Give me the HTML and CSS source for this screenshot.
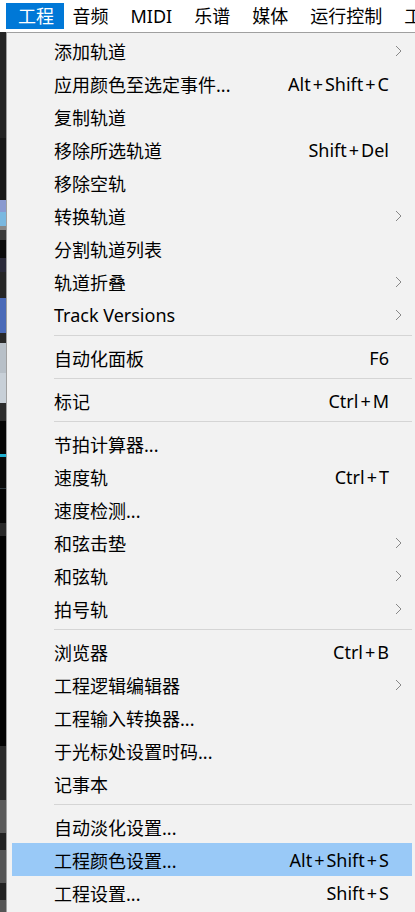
FILE: index.html
```html
<!DOCTYPE html>
<html lang="zh-CN">
<head>
  <meta charset="UTF-8" />
  <meta name="viewport" content="width=device-width, initial-scale=1.0"/>
  <title>工程菜单</title>
  <link rel="stylesheet" href="styles.css">
</head>
<body>

<!-- 顶部菜单栏 -->
<div class="menubar">
  <span class="bar-item active">工程</span>
  <span class="bar-item">音频</span>
  <span class="bar-item">MIDI</span>
  <span class="bar-item">乐谱</span>
  <span class="bar-item">媒体</span>
  <span class="bar-item">运行控制</span>
  <span class="bar-item">工</span>
</div>

<div class="workspace">
  <!-- 背后的程序窗口（只露出一条） -->
  <div class="strip">
    <div class="s1"></div><div class="s2"></div><div class="s3"></div><div class="s4"></div>
    <div class="s5"></div><div class="s6"></div><div class="s7"></div><div class="s8"></div>
    <div class="s9"></div><div class="s10"></div><div class="s11"></div><div class="s12"></div>
    <div class="s13"></div><div class="s14"></div><div class="s15"></div><div class="s16"></div>
    <div class="s17"></div><div class="s18"></div><div class="s19"></div><div class="s20"></div>
    <div class="s21"></div><div class="s22"></div><div class="s23"></div><div class="s24"></div>
    <div class="s25"></div><div class="s26"></div>
  </div>

  <!-- 下拉菜单 -->
  <div class="menu">
    <div class="row"><span class="label">添加轨道</span><span class="key"></span><span class="sub"><svg viewBox="0 0 7 12"><polyline points="1,1 6,6 1,11"/></svg></span></div>
    <div class="row"><span class="label">应用颜色至选定事件...</span><span class="key">Alt<i>+</i>Shift<i>+</i>C</span><span class="sub"></span></div>
    <div class="row"><span class="label">复制轨道</span><span class="key"></span><span class="sub"></span></div>
    <div class="row"><span class="label">移除所选轨道</span><span class="key">Shift<i>+</i>Del</span><span class="sub"></span></div>
    <div class="row"><span class="label">移除空轨</span><span class="key"></span><span class="sub"></span></div>
    <div class="row"><span class="label">转换轨道</span><span class="key"></span><span class="sub"><svg viewBox="0 0 7 12"><polyline points="1,1 6,6 1,11"/></svg></span></div>
    <div class="row"><span class="label">分割轨道列表</span><span class="key"></span><span class="sub"></span></div>
    <div class="row"><span class="label">轨道折叠</span><span class="key"></span><span class="sub"><svg viewBox="0 0 7 12"><polyline points="1,1 6,6 1,11"/></svg></span></div>
    <div class="row"><span class="label">Track Versions</span><span class="key"></span><span class="sub"><svg viewBox="0 0 7 12"><polyline points="1,1 6,6 1,11"/></svg></span></div>
    <div class="sep"></div>
    <div class="row"><span class="label">自动化面板</span><span class="key">F6</span><span class="sub"></span></div>
    <div class="sep"></div>
    <div class="row"><span class="label">标记</span><span class="key">Ctrl<i>+</i>M</span><span class="sub"></span></div>
    <div class="sep"></div>
    <div class="row"><span class="label">节拍计算器...</span><span class="key"></span><span class="sub"></span></div>
    <div class="row"><span class="label">速度轨</span><span class="key">Ctrl<i>+</i>T</span><span class="sub"></span></div>
    <div class="row"><span class="label">速度检测...</span><span class="key"></span><span class="sub"></span></div>
    <div class="row"><span class="label">和弦击垫</span><span class="key"></span><span class="sub"><svg viewBox="0 0 7 12"><polyline points="1,1 6,6 1,11"/></svg></span></div>
    <div class="row"><span class="label">和弦轨</span><span class="key"></span><span class="sub"><svg viewBox="0 0 7 12"><polyline points="1,1 6,6 1,11"/></svg></span></div>
    <div class="row"><span class="label">拍号轨</span><span class="key"></span><span class="sub"><svg viewBox="0 0 7 12"><polyline points="1,1 6,6 1,11"/></svg></span></div>
    <div class="sep"></div>
    <div class="row"><span class="label">浏览器</span><span class="key">Ctrl<i>+</i>B</span><span class="sub"></span></div>
    <div class="row"><span class="label">工程逻辑编辑器</span><span class="key"></span><span class="sub"><svg viewBox="0 0 7 12"><polyline points="1,1 6,6 1,11"/></svg></span></div>
    <div class="row"><span class="label">工程输入转换器...</span><span class="key"></span><span class="sub"></span></div>
    <div class="row"><span class="label">于光标处设置时码...</span><span class="key"></span><span class="sub"></span></div>
    <div class="row"><span class="label">记事本</span><span class="key"></span><span class="sub"></span></div>
    <div class="sep"></div>
    <div class="row"><span class="label">自动淡化设置...</span><span class="key"></span><span class="sub"></span></div>
    <div class="row hover"><span class="label">工程颜色设置...</span><span class="key">Alt<i>+</i>Shift<i>+</i>S</span><span class="sub"></span></div>
    <div class="row"><span class="label">工程设置...</span><span class="key">Shift<i>+</i>S</span><span class="sub"></span></div>
  </div>
</div>

</body>
</html>
```
FILE: styles.css
```css
body {
  margin: 0;
  width: 415px;
  height: 912px;
  overflow: hidden;
  background-color: #ffffff;
  font-family: "Noto Sans", "Noto Sans CJK SC", sans-serif;
  color: #000;
}
.menubar {
  display: flex;
  height: 32px;
  padding: 3px 0 0 6px;
  box-sizing: border-box;
  white-space: nowrap;
  font-size: 18px;
}
.bar-item {
  height: 26px;
  line-height: 26px;
  padding: 0 11px;
}
.bar-item.active {
  padding: 0 10px 0 12px;
  margin-right: -2.5px;
  background-color: #0078d7;
  color: #fff;
}
.workspace {
  display: flex;
  height: 880px;
}
.strip {
  width: 6px;
  flex: none;
  display: flex;
  flex-direction: column;
}
.strip div { flex: none; }
.s1 { height: 106px; background: #242424; }
.s2 { height: 62px; background: #181818; }
.s3 { height: 12px; background: #8a9ad0; }
.s4 { height: 14px; background: #7ab8e0; }
.s5 { height: 4px; background: #888; }
.s6 { height: 10px; background: #3a3a3a; }
.s7 { height: 18px; background: #0c0c0c; }
.s8 { height: 14px; background: #2a2a3a; }
.s9 { height: 26px; background: #262626; }
.s10 { height: 35px; background: #4a6ab8; }
.s11 { height: 10px; background: #282828; }
.s12 { height: 30px; background: #b8c0c8; }
.s13 { height: 30px; background: #c8d0d8; }
.s14 { height: 18px; background: #2c2c2c; }
.s15 { height: 33px; background: #050505; }
.s16 { height: 3px; background: #20b0d0; }
.s17 { height: 31px; background: #0a0a0a; }
.s18 { height: 34px; background: #050505; border-top: 1px solid #303a40; }
.s19 { height: 13px; background: #282828; }
.s20 { height: 210px; background: #030303; }
.s21 { height: 54px; background: #2a2a2a; }
.s22 { height: 33px; background: #5a5a5a; }
.s23 { height: 17px; background: #222; }
.s24 { height: 33px; background: #555; }
.s25 { height: 17px; background: #222; }
.s26 { height: 20px; background: #555; }

.menu {
  width: 410px;
  flex: none;
  box-sizing: border-box;
  background-color: #f2f2f2;
  border-top: 1px solid #a0a0a0;
  border-left: 1px solid #a0a0a0;
  padding: 1px 4px 0 5px;
  font-size: 18px;
}
.row {
  display: flex;
  align-items: center;
  height: 33px;
  padding-left: 42px;
  white-space: nowrap;
}
.row.hover {
  background-color: #99c9f7;
}
.label {
  flex: 1;
}
.key {
  text-align: right;
}
.key i {
  font-style: normal;
  margin: 0 2px;
}
.sub {
  width: 23px;
  flex: none;
  display: flex;
  align-items: center;
}
.sub svg {
  width: 7px;
  height: 12px;
  margin-left: 6px;
  fill: none;
  stroke: #888;
  stroke-width: 1;
}
.sep {
  height: 1px;
  margin: 4px 0 5px 42px;
  background-color: #d5d5d5;
}
```
